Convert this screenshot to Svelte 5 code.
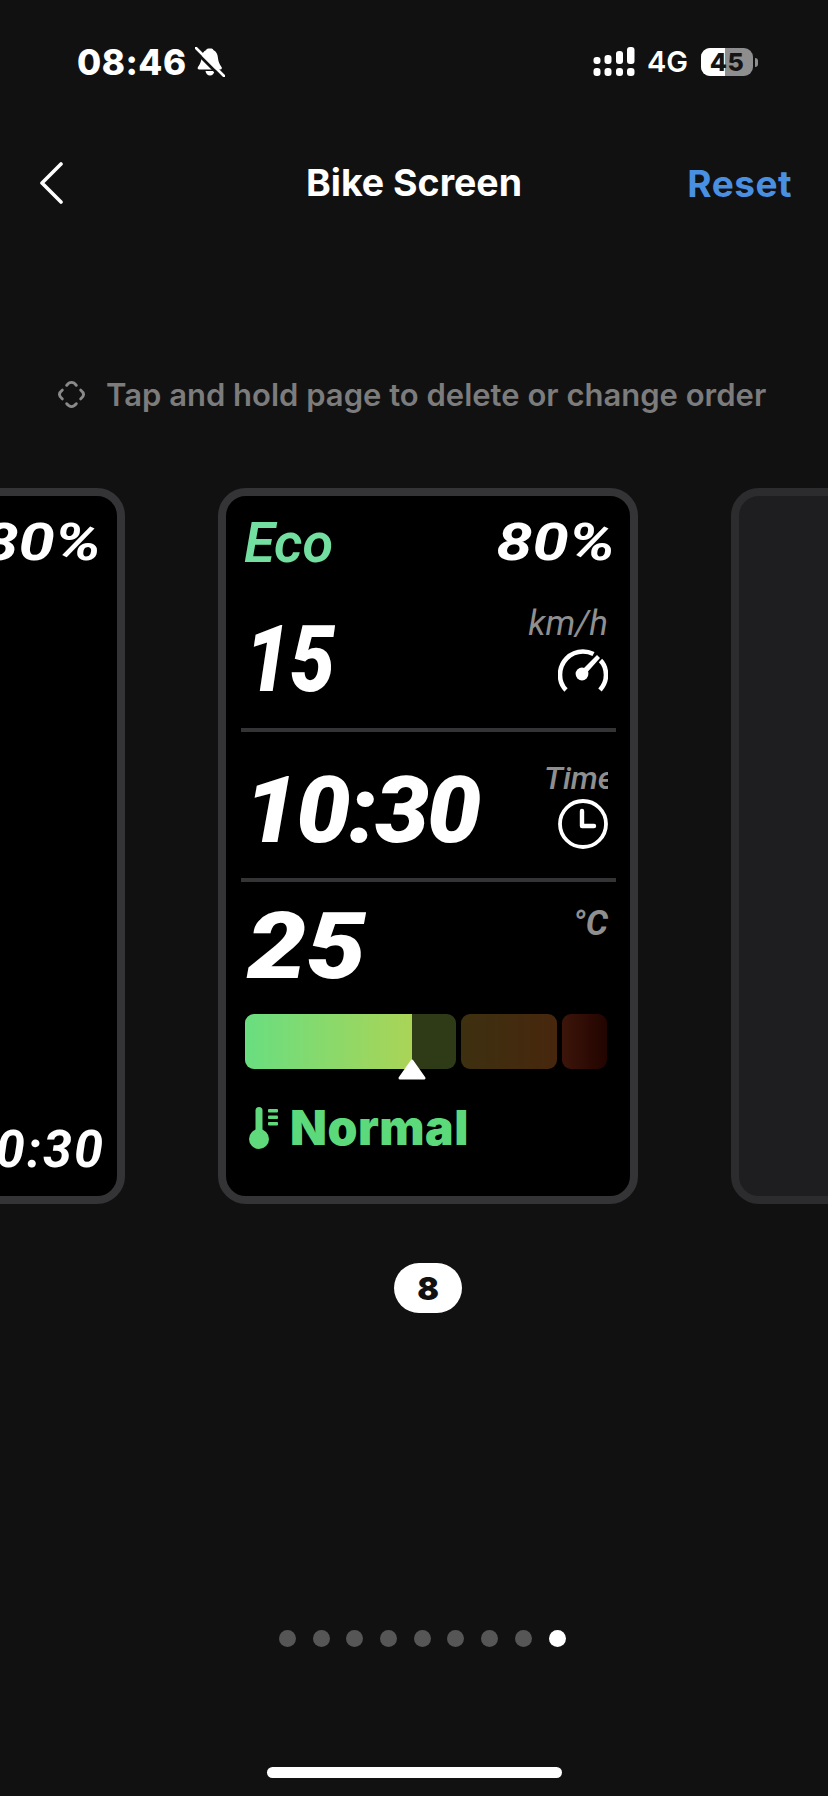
<script>
  const dots = [0, 1, 2, 3, 4, 5, 6, 7, 8];
</script>

<div class="screen">
  <header class="status">
    <div class="status-left">
      <span class="clock-text">08:46</span>
      <svg class="bell" viewBox="0 0 30 30" aria-hidden="true">
        <path d="M13.5 1.5h3c1 0 1.6.8 1.8 1.6 3 1.2 4.2 4 4.6 7.4.4 3.800 1.300 6.500 3.600 9.500.8 1.100.2 2.500-1.200 2.500H4.200c-1.400 0-2-1.400-1.200-2.500 2.300-3 3.200-5.700 3.600-9.500.4-3.400 1.600-6.200 4.600-7.400.2-.8.800-1.600 2.300-1.600z" fill="#fff"/>
        <path d="M10.500 24h9c-.3 2.600-2.100 4.500-4.500 4.500s-4.200-1.900-4.500-4.500z" fill="#fff"/>
        <path d="M-1 3 L26 30" stroke="#111112" stroke-width="3"/>
        <path d="M1 1 L29 29" stroke="#fff" stroke-width="2.600" stroke-linecap="round"/>
      </svg>
    </div>
    <div class="status-right">
      <svg class="signal" viewBox="0 0 42 30" aria-hidden="true">
        <g fill="#fff">
          <rect x="0.500" y="21" width="7" height="8" rx="3"/>
          <rect x="11.500" y="21" width="7" height="8" rx="3"/>
          <rect x="23" y="21" width="7" height="8" rx="3"/>
          <rect x="34" y="21" width="7.500" height="8" rx="3"/>
          <rect x="0.500" y="10" width="7" height="7" rx="3"/>
          <rect x="11.500" y="8" width="7" height="9" rx="3"/>
          <rect x="23" y="4" width="7" height="13" rx="3"/>
          <rect x="34" y="0" width="7.500" height="17" rx="3"/>
        </g>
      </svg>
      <span class="net">4G</span>
      <div class="battery">
        <div class="battery-level"></div>
        <span class="battery-text">45</span>
      </div>
      <span class="battery-nub"></span>
    </div>
  </header>

  <nav class="nav">
    <svg class="back" viewBox="0 0 24 42" aria-hidden="true">
      <path d="M22 2 L3 21 L22 40" fill="none" stroke="#fff" stroke-width="3.600" stroke-linecap="round" stroke-linejoin="round"/>
    </svg>
    <h1 class="title">Bike Screen</h1>
    <button class="reset">Reset</button>
  </nav>

  <div class="hint">
    <svg class="hint-icon" viewBox="0 0 30 30" aria-hidden="true">
      <g fill="none" stroke="#8a8a8a" stroke-width="3" stroke-linecap="round">
        <path d="M10 5.500 C11.500 3.500 13 2.500 15 2.500 C17 2.500 18.500 3.500 20 5.500"/>
        <path d="M10 24.500 C11.500 26.500 13 27.500 15 27.500 C17 27.500 18.500 26.500 20 24.500"/>
        <path d="M5.500 10.500 C3.500 12 2.500 13.500 2.500 15 C2.500 16.500 3.500 18 5.500 19.500"/>
        <path d="M24.500 10.500 C26.500 12 27.500 13.500 27.500 15 C27.500 16.500 26.500 18 24.500 19.500"/>
      </g>
    </svg>
    <span>Tap and hold page to delete or change order</span>
  </div>

  <section class="carousel">
    <article class="card side-left">
      <div class="top-row end"><span class="pct">80%</span></div>
      <div class="left-time">10:30</div>
    </article>

    <article class="card">
      <div class="top-row">
        <span class="mode">Eco</span>
        <span class="pct">80%</span>
      </div>

      <div class="metric speed">
        <span class="value v15">15</span>
        <div class="side">
          <span class="unit">km/h</span>
          <svg class="gauge" viewBox="0 0 50 44" aria-hidden="true">
            <g fill="none" stroke="#fff" stroke-width="4.600">
              <path d="M8 41 C3 36 2 31 2 26 C2 13 12 2.500 25 2.500 C29 2.500 32.500 3.500 35.500 5"/>
              <path d="M42.500 11.500 C46.500 15.500 48 20.500 48 26 C48 31 46.500 36 42 41"/>
            </g>
            <circle cx="24" cy="25" r="6.400" fill="#fff"/>
            <path d="M22 23 L39 6 L42 9 L26 27 Z" fill="#fff"/>
          </svg>
        </div>
      </div>

      <div class="divider"></div>

      <div class="metric time">
        <span class="value v1030">10:30</span>
        <div class="side">
          <span class="unit clip">Time</span>
          <svg class="clock" viewBox="0 0 50 50" aria-hidden="true">
            <circle cx="25" cy="25" r="23" fill="none" stroke="#fff" stroke-width="3.800"/>
            <path d="M24 12 V27 H36" fill="none" stroke="#fff" stroke-width="4.400" stroke-linecap="round" stroke-linejoin="round"/>
          </svg>
        </div>
      </div>

      <div class="divider"></div>

      <div class="metric temp">
        <span class="value v25">25</span>
        <span class="unit celsius">°C</span>
      </div>

      <div class="bar">
        <div class="seg seg-a"><div class="seg-fill"></div></div>
        <div class="seg seg-b"></div>
        <div class="seg seg-c"></div>
        <svg class="pointer" viewBox="0 0 30 24" aria-hidden="true">
          <path d="M15 3 L27 20 H3 Z" fill="#fff" stroke="#fff" stroke-width="3" stroke-linejoin="round"/>
        </svg>
      </div>

      <div class="status-line">
        <svg class="thermo" viewBox="0 0 30 42" aria-hidden="true">
          <g fill="#5fd97c">
            <rect x="6.500" y="0" width="7" height="32" rx="3.500"/>
            <circle cx="10" cy="32" r="10"/>
            <rect x="19" y="2" width="10" height="3.400" rx="1"/>
            <rect x="19" y="8.500" width="10" height="3.400" rx="1"/>
            <rect x="19" y="15" width="10" height="3.400" rx="1"/>
          </g>
        </svg>
        <span class="normal">Normal</span>
      </div>
    </article>

    <article class="card side-right"></article>
  </section>

  <div class="badge"><span>8</span></div>

  <div class="dots">
    {#each dots as d}
      <span class="dot" class:active={d === 8}></span>
    {/each}
  </div>

  <div class="home"></div>
</div>

<style>
  :global(body) {
    margin: 0;
    background: #111112;
  }

  .screen {
    width: 828px;
    height: 1796px;
    background: #111112;
    overflow: hidden;
    display: flex;
    flex-direction: column;
    font-family: Inter, "Liberation Sans", sans-serif;
    color: #fff;
  }

  .status {
    height: 42px;
    margin-top: 41px;
    padding: 0 70px 0 77px;
    display: flex;
    justify-content: space-between;
    align-items: center;
  }

  .status-left {
    display: flex;
    align-items: center;
    gap: 8px;
  }

  .clock-text {
    font-size: 35px;
    font-weight: 800;
    letter-spacing: 0.5px;
    line-height: 42px;
  }

  .bell {
    width: 30px;
    height: 30px;
  }

  .status-right {
    display: flex;
    align-items: center;
  }

  .signal {
    width: 42px;
    height: 30px;
  }

  .net {
    margin-left: 12px;
    width: 43px;
    font-size: 29px;
    font-weight: 600;
    line-height: 30px;
  }

  .battery {
    position: relative;
    margin-left: 11px;
    width: 52px;
    height: 28px;
    border-radius: 9px;
    background: #8e8e8e;
    overflow: hidden;
    display: flex;
    align-items: center;
    justify-content: center;
  }

  .battery-level {
    position: absolute;
    left: 0;
    top: 0;
    bottom: 0;
    width: 24px;
    background: #fff;
  }

  .battery-text {
    position: relative;
    color: #141414;
    font-size: 25px;
    font-weight: 800;
    letter-spacing: 0.5px;
  }

  .battery-nub {
    width: 3px;
    height: 9px;
    margin-left: 2px;
    border-radius: 0 3px 3px 0;
    background: #8e8e8e;
  }

  .nav {
    margin-top: 64px;
    height: 72px;
    padding: 0 36px 0 39px;
    position: relative;
    display: flex;
    justify-content: space-between;
    align-items: center;
  }

  .back {
    width: 24px;
    height: 42px;
  }

  .title {
    position: absolute;
    left: 0;
    right: 0;
    margin: 0;
    text-align: center;
    font-size: 37.500px;
    font-weight: 700;
    line-height: 72px;
  }

  .reset {
    border: 0;
    padding: 0;
    background: none;
    color: #4a90e2;
    font-family: inherit;
    font-size: 37px;
    font-weight: 700;
    letter-spacing: 0.5px;
  }

  .hint {
    margin-top: 155px;
    height: 40px;
    padding-left: 57px;
    display: flex;
    align-items: center;
    gap: 20px;
    color: #7c7c7c;
    font-size: 31px;
    font-weight: 600;
    white-space: nowrap;
  }

  .hint-icon {
    width: 29px;
    height: 29px;
  }

  .carousel {
    margin-top: 74px;
    margin-left: -295px;
    height: 716px;
    display: flex;
    gap: 93px;
  }

  .card {
    box-sizing: border-box;
    flex: none;
    width: 420px;
    height: 716px;
    border: 8px solid #343437;
    border-radius: 28px;
    background: #000;
    padding: 0 14px 0 15px;
    display: flex;
    flex-direction: column;
    font-family: Roboto, "Liberation Sans", sans-serif;
    font-style: italic;
    font-weight: 700;
  }

  .side-right {
    background: #1e1e20;
    border-color: #2c2c2e;
  }

  .side-left {
    padding: 0;
    align-items: flex-end;
  }

  .side-left .top-row {
    padding: 22px 16px 0 0;
  }

  .left-time {
    margin-top: auto;
    margin-bottom: 21px;
    margin-right: 12px;
    font-size: 52px;
    line-height: 50px;
    letter-spacing: 2px;
    white-space: nowrap;
  }

  .top-row {
    padding: 22px 1px 0 3px;
    height: 50px;
    display: flex;
    justify-content: space-between;
    align-items: center;
    font-size: 52px;
    line-height: 50px;
  }

  .top-row.end {
    justify-content: flex-end;
  }

  .mode {
    color: #72dfa0;
    font-size: 56px;
    font-weight: 600;
  }

  .pct {
    transform: scaleX(1.25);
    transform-origin: right center;
  }

  .metric {
    display: flex;
    justify-content: space-between;
    padding: 0 8px 0 11px;
  }

  .speed {
    height: 160px;
  }

  .time {
    height: 146px;
  }

  .temp {
    height: 132px;
  }

  .value {
    font-size: 92px;
    font-weight: 900;
    line-height: 66px;
    white-space: nowrap;
    transform-origin: left center;
  }

  .speed .value {
    margin-top: 59px;
    margin-left: -7px;
  }

  .time .value {
    margin-top: 46px;
    margin-left: -8px;
  }

  .temp .value {
    margin-top: 32px;
    margin-left: -5px;
  }

  .v15 {
    transform: scaleX(0.87);
  }

  .v1030 {
    letter-spacing: -2px;
    transform: scaleX(1.05);
  }

  .v25 {
    transform: scaleX(1.15);
  }

  .side {
    display: flex;
    flex-direction: column;
    align-items: flex-end;
  }

  .unit {
    color: #8f8f8f;
    font-size: 35px;
    font-weight: 400;
    line-height: 30px;
  }

  .speed .unit {
    margin-top: 41px;
  }

  .gauge {
    margin-top: 10px;
    width: 50px;
    height: 44px;
  }

  .time .unit {
    margin-top: 31px;
    font-size: 32px;
    font-weight: 500;
  }

  .clip {
    width: 64px;
    overflow: hidden;
    white-space: nowrap;
  }

  .clock {
    margin-top: 6px;
    width: 50px;
    height: 50px;
  }

  .celsius {
    margin-top: 27px;
    font-weight: 700;
    height: 30px;
  }

  .divider {
    height: 4px;
    flex: none;
    background: #343437;
  }

  .bar {
    position: relative;
    display: flex;
    gap: 5px;
    height: 55px;
    padding: 0 9px 0 4px;
  }

  .seg {
    height: 55px;
    border-radius: 9px;
    overflow: hidden;
  }

  .seg-a {
    width: 211px;
    background: #2f3a16;
  }

  .seg-fill {
    width: 167px;
    height: 100%;
    background: linear-gradient(90deg, #69de80, #aad456);
  }

  .seg-b {
    width: 96px;
    background: linear-gradient(90deg, #3d3010, #47270d);
  }

  .seg-c {
    width: 45px;
    background: linear-gradient(90deg, #3d150a, #220400);
  }

  .pointer {
    position: absolute;
    left: 156px;
    top: 44px;
    width: 30px;
    height: 24px;
  }

  .status-line {
    margin-top: 38px;
    padding-left: 8px;
    display: flex;
    align-items: center;
    gap: 11px;
    color: #5cd97b;
    font-family: Inter, "Liberation Sans", sans-serif;
    font-style: normal;
  }

  .thermo {
    width: 30px;
    height: 42px;
  }

  .normal {
    font-size: 48px;
    font-weight: 900;
    line-height: 42px;
    letter-spacing: 0.5px;
  }

  .badge {
    margin-top: 59px;
    margin-left: 394px;
    width: 68px;
    height: 50px;
    border-radius: 25px;
    background: #fff;
    color: #111;
    display: flex;
    align-items: center;
    justify-content: center;
    font-size: 32px;
    font-weight: 900;
  }

  .dots {
    margin-top: 317px;
    margin-left: 279px;
    display: flex;
    gap: 16.700px;
  }

  .dot {
    width: 17px;
    height: 17px;
    border-radius: 50%;
    background: #565656;
  }

  .dot.active {
    background: #fff;
  }

  .home {
    margin-top: 120px;
    margin-left: 267px;
    width: 295px;
    height: 11px;
    border-radius: 6px;
    background: #fff;
  }
</style>
